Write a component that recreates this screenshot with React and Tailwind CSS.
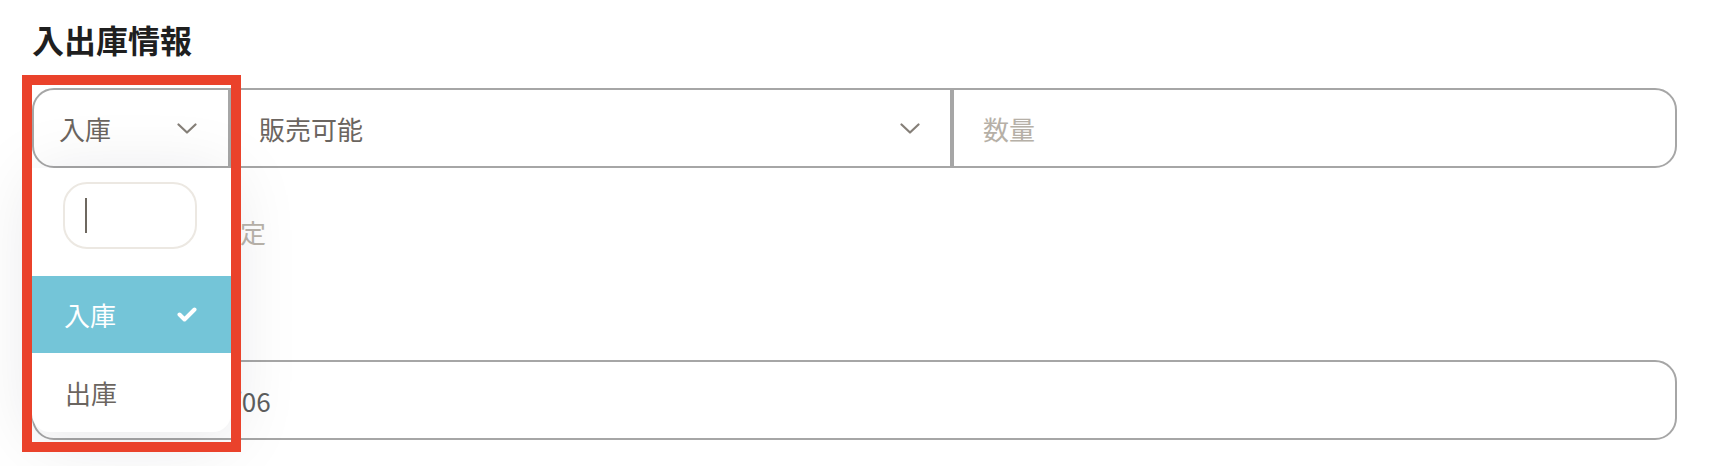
import { useState } from "react";

function Chevron({ className }) {
  return (
    <svg
      viewBox="0 0 20 11"
      className={className}
      fill="none"
      stroke="currentColor"
      strokeWidth="2.2"
      strokeLinecap="round"
      strokeLinejoin="round"
    >
      <path d="M1.5 1.5 10 9.5 18.5 1.5" />
    </svg>
  );
}

function Check() {
  return (
    <svg
      viewBox="0 0 20 15"
      className="w-[20px] h-[15px] text-white"
      fill="none"
      stroke="currentColor"
      strokeWidth="4"
      strokeLinecap="round"
      strokeLinejoin="round"
    >
      <path d="M2.5 7.5 7.5 12.5 17.5 2.5" />
    </svg>
  );
}

const options = ["入庫", "出庫"];

export default function App() {
  const [selected, setSelected] = useState("入庫");

  return (
    <div className="relative w-[1736px] h-[466px] overflow-hidden bg-white pl-[32px] pr-[59px] font-['Noto_Sans_CJK_JP','Noto_Sans',sans-serif]">
      <h2 className="pt-[15px] leading-[48px] text-[32px] font-bold text-[#1f1f1f]">
        入出庫情報
      </h2>

      {/* main row */}
      <div className="mt-[25px] flex h-[80px] text-[26px]">
        <div className="relative z-10 w-[198px] shrink-0">
          <button
            type="button"
            className="flex h-full w-full items-center justify-between rounded-l-[22px] border-2 border-[#a6a6a6] pl-[25px] pr-[31px] text-[#6b6560]"
          >
            <span>{selected}</span>
            <Chevron className="w-[20px] h-[11px] text-[#857f78]" />
          </button>

          <div className="absolute left-0 top-full w-[199px] h-[264px] rounded-b-[18px] bg-white pt-[14px] shadow-[0_8px_70px_rgba(20,20,40,0.1)]">
            <div className="ml-[31px] flex h-[67px] w-[134px] items-center rounded-[24px] border-2 border-[#ece8e2] pl-[20px]">
              <span className="h-[35px] w-[2px] bg-[#6e6860]" />
            </div>

            <ul className="mt-[27px]">
              {options.map((o) => (
                <li
                  key={o}
                  onClick={() => setSelected(o)}
                  className={
                    o === selected
                      ? "flex h-[77px] items-center justify-between bg-[#74c5d8] pl-[32px] pr-[34px] text-white"
                      : "flex h-[79px] items-center justify-between pl-[33px] pr-[34px] text-[#6b6560]"
                  }
                >
                  <span>{o}</span>
                  {o === selected && <Check />}
                </li>
              ))}
            </ul>
          </div>
        </div>

        <button
          type="button"
          className="flex w-[722px] shrink-0 items-center justify-between border-2 border-[#a6a6a6] pl-[27px] pr-[30px] text-[#6b6560]"
        >
          <span>販売可能</span>
          <Chevron className="w-[20px] h-[11px] text-[#857f78]" />
        </button>

        <input
          placeholder="数量"
          className="min-w-0 flex-1 rounded-r-[22px] border-2 border-[#a6a6a6] pl-[29px] text-[#6b6560] outline-none placeholder:text-[#b6b0a7]"
        />
      </div>

      <p className="pt-[46px] pl-[26px] leading-[36px] text-[26px] text-[#b9b3aa]">
        保管場所：未設定
      </p>

      <div className="mt-[110px] flex h-[80px] items-center rounded-[22px] border-2 border-[#a6a6a6] pl-[17px] text-[26px] text-[#5e5e5e]">
        入庫日 2024/12/06
      </div>

      {/* annotation frame */}
      <div className="pointer-events-none absolute left-[22px] top-[75px] z-20 h-[377px] w-[219px] border-[10px] border-[#ea422b]" />
    </div>
  );
}
